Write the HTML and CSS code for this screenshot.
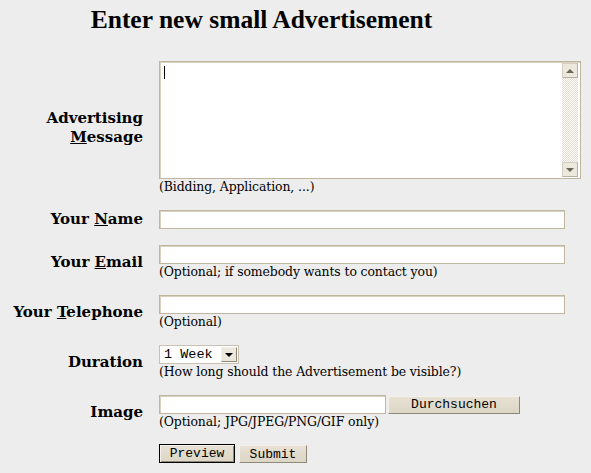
FILE: index.html
```html
<!DOCTYPE html>
<html>
<head>
<meta charset="utf-8">
<link rel="stylesheet" href="styles.css">
</head>
<body>
<h1 class="title">Enter new small Advertisement</h1>
<form class="form">
  <label class="label">Advertising<br><u>M</u>essage</label>
  <div class="field">
    <div class="ta-box">
      <div class="ta"><span class="caret"></span></div>
      <div class="sbar">
        <div class="sbtn"><span class="arr up"></span></div>
        <div class="strack"></div>
        <div class="sbtn"><span class="arr down"></span></div>
      </div>
    </div>
    <div class="hint">(Bidding, Application, ...)</div>
  </div>

  <label class="label">Your <u>N</u>ame</label>
  <div class="field"><div class="inp wide"></div></div>

  <label class="label">Your <u>E</u>mail</label>
  <div class="field"><div class="inp wide"></div><div class="hint">(Optional; if somebody wants to contact you)</div></div>

  <label class="label">Your <u>T</u>elephone</label>
  <div class="field"><div class="inp wide"></div><div class="hint">(Optional)</div></div>

  <label class="label">Duration</label>
  <div class="field">
    <div class="sel"><span class="sel-text">1 Week</span><span class="sel-btn"><span class="arr down"></span></span></div>
    <div class="hint">(How long should the Advertisement be visible?)</div>
  </div>

  <label class="label">Image</label>
  <div class="field">
    <div class="file"><div class="inp file-inp"></div><span class="btn browse">Durchsuchen</span></div>
    <div class="hint">(Optional; JPG/JPEG/PNG/GIF only)</div>
  </div>

  <div></div>
  <div class="field buttons"><span class="btn default">Preview</span><span class="btn plain">Submit</span></div>
</form>
</body>
</html>
```
FILE: styles.css
```css
html, body { margin: 0; padding: 0; }
body {
  background: #ededed;
  color: #000;
  font-family: "DejaVu Serif", serif;
  width: 591px;
  height: 473px;
  overflow: hidden;
}
.title {
  font-family: "Liberation Serif", "Times New Roman", serif;
  font-weight: bold;
  font-size: 25.5px;
  line-height: 30px;
  text-align: center;
  margin: 5px 0 26px 0;
  padding-right: 68px;
}
.form {
  display: grid;
  grid-template-columns: 143px 422px;
  column-gap: 16px;
  row-gap: 16px;
  align-items: center;
}
.label {
  font-weight: bold;
  font-size: 15px;
  line-height: 19px;
  text-align: right;
}
.field { display: flex; flex-direction: column; align-items: flex-start; }
.hint {
  font-size: 12.45px;
  line-height: 14px;
  margin-top: 1px;
  letter-spacing: -0.1px;
}
.ta-box {
  width: 422px;
  height: 118px;
  box-sizing: border-box;
  border: 1px solid #c0b6a0;
  box-shadow: inset 1px 1px 0 #d8d0c0;
  background: #fff;
  display: flex;
  padding: 1px;
}
.ta { flex: 1; position: relative; }
.caret {
  position: absolute;
  left: 3px;
  top: 3px;
  width: 1px;
  height: 13px;
  background: #000;
}
.sbar {
  width: 16px;
  display: flex;
  flex-direction: column;
  margin-right: 1px;
}
.sbtn {
  height: 15px;
  box-sizing: border-box;
  background: #ece8de;
  border: 1px solid #d6cfc0;
  border-right-color: #b8b0a0;
  border-bottom-color: #b8b0a0;
  display: flex;
  align-items: center;
  justify-content: center;
}
.strack {
  flex: 1;
  background-color: #fbfaf8;
  background-image: repeating-conic-gradient(#e4dfd4 0 25%, #fbfaf8 0 50%);
  background-size: 2px 2px;
}
.arr { width: 0; height: 0; display: block; }
.arr.up { border-left: 4px solid transparent; border-right: 4px solid transparent; border-bottom: 4px solid #6a6455; }
.arr.down { border-left: 4px solid transparent; border-right: 4px solid transparent; border-top: 4px solid #6a6455; }

.inp {
  height: 19px;
  box-sizing: border-box;
  border: 1px solid #c0b6a0;
  box-shadow: inset 1px 1px 0 #d8d0c0;
  background: #fff;
}
.inp.wide { width: 406px; }

.sel {
  width: 80px;
  height: 19px;
  box-sizing: border-box;
  border: 1px solid #c8c0b0;
  background: #fff;
  display: flex;
  align-items: center;
  padding: 1px;
}
.sel-text {
  flex: 1;
  font-family: "Liberation Mono", monospace;
  font-size: 13.5px;
  line-height: 15px;
  padding-left: 3px;
}
.sel-btn {
  width: 16px;
  height: 15px;
  box-sizing: border-box;
  background: #ece8de;
  border: 1px solid #f4f1ea;
  border-right-color: #8f8878;
  border-bottom-color: #8f8878;
  display: flex;
  align-items: center;
  justify-content: center;
}
.sel-btn .arr.down { border-top-color: #000; }

.file { display: flex; align-items: center; gap: 2px; }
.file-inp { width: 227px; height: 19px; }
.btn {
  font-family: "Liberation Mono", monospace;
  font-size: 13px;
  line-height: 15px;
  box-sizing: border-box;
  height: 18px;
  padding: 0 10px;
  background: linear-gradient(#e6e1d3, #dcd6c6);
  border: 1px solid #f4f1ea;
  border-right-color: #8f8878;
  border-bottom-color: #8f8878;
  display: inline-flex;
  align-items: center;
  justify-content: center;
  color: #000;
}
.btn.browse { width: 132px; height: 18px; }
.buttons { flex-direction: row; gap: 4px; align-items: flex-end; margin-top: -1px; }
.btn.default {
  height: 19px;
  width: 76px;
  border: 1px solid #000;
  box-shadow: inset 1px 1px 0 #f4f1ea, inset -1px -1px 0 #8f8878;
}
.btn.plain { width: 68px; height: 18px; }
```
